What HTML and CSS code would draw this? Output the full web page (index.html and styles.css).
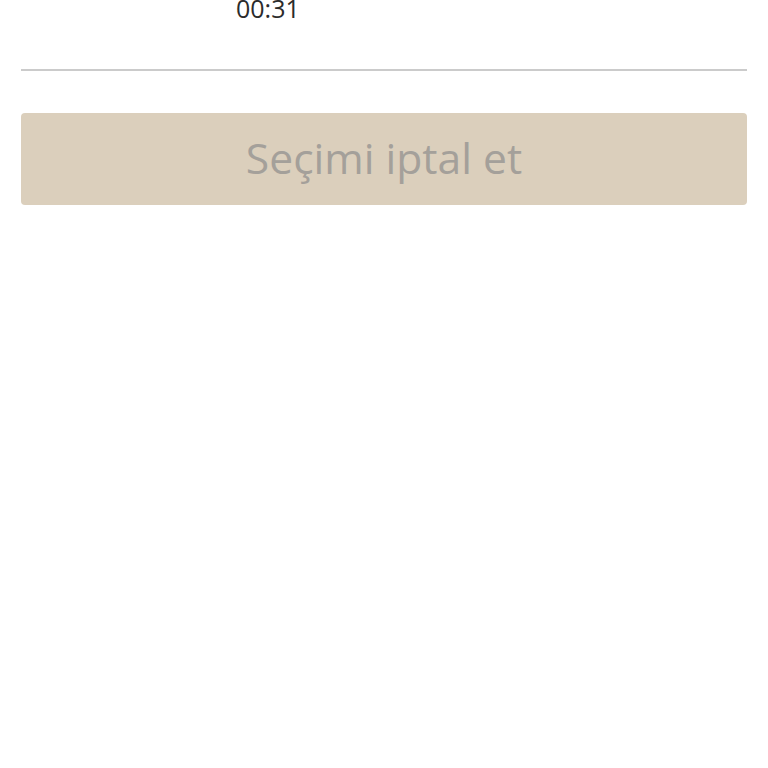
FILE: index.html
```html
<!DOCTYPE html>
<html lang="tr">
<head>
  <meta charset="UTF-8">
  <title>Seçim</title>
  <link rel="stylesheet" href="styles.css">
</head>
<body>
  <div class="panel">
    <div class="timer-row">
      <span class="timer">00:31</span>
    </div>
    <hr class="divider">
    <button class="cancel-btn" disabled>Seçimi iptal et</button>
  </div>
</body>
</html>
```

FILE: styles.css
```css
body {
  margin: 0;
  padding: 0;
  background: #fff;
  font-family: 'Open Sans', 'Noto Sans', sans-serif;
  color: #222;
}
.panel {
  padding: 0 21px;
}
.timer-row {
  display: flex;
  padding-left: 215px;
  height: 45px;
  margin-top: -4px;
}
.timer {
  font-size: 25px;
  line-height: 24px;
  color: #2b2b2b;
}
.divider {
  border: none;
  height: 2px;
  background: #cbcbcb;
  margin: 28px 0 0;
}
.cancel-btn {
  display: flex;
  justify-content: center;
  align-items: center;
  width: 100%;
  height: 92px;
  margin-top: 42px;
  padding: 0 0 4px;
  border: none;
  border-radius: 4px;
  background: #dbcfbc;
  color: #a4a09a;
  font-family: inherit;
  font-size: 42.6px;
}
```
